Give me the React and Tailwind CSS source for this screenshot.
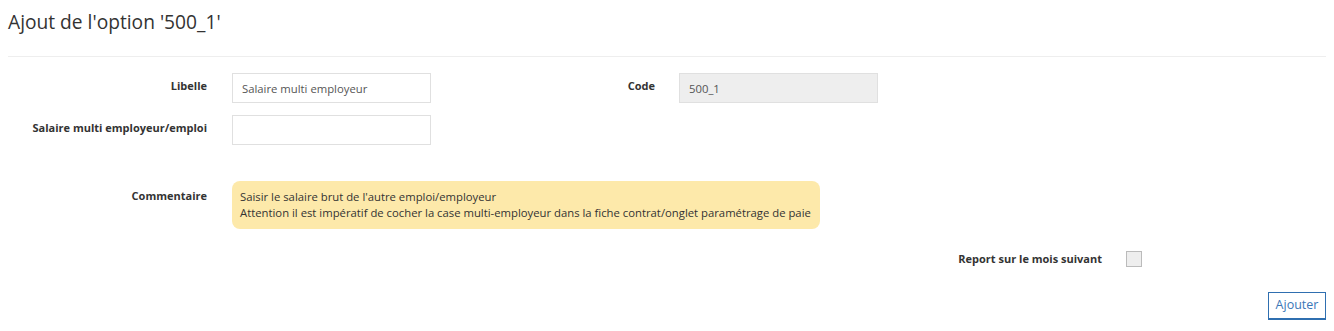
export default function App() {
  const label = 'text-right text-[11px] leading-4 font-bold text-[#333]';
  const input = 'h-[30px] w-[199px] border border-[#e0e0e0] px-[9px] text-[11.3px] text-[#555] outline-none';

  return (
    <div className="min-h-screen bg-white px-2 font-['Open_Sans',sans-serif] text-[#333]">
      <h1 className="mt-2 text-[19.2px] leading-7 font-normal">Ajout de l'option '500_1'</h1>
      <hr className="mt-5 border-0 border-t border-[#eeeeee]" />

      {/* Libelle + Code */}
      <div className="mt-4 flex items-start">
        <label className={`${label} w-[199px] pt-[5px]`}>Libelle</label>
        <input className={`${input} ml-[25px]`} defaultValue="Salaire multi employeur" />
        <label className={`${label} w-[224px] pt-[5px]`}>Code</label>
        <input className={`${input} ml-6 bg-[#eeeeee]`} defaultValue="500_1" readOnly />
      </div>

      <div className="mt-3 flex items-start">
        <label className={`${label} w-[199px] pt-[5px]`}>Salaire multi employeur/emploi</label>
        <input className={`${input} ml-[25px]`} />
      </div>

      {/* Commentaire */}
      <div className="mt-9 flex items-start">
        <label className={`${label} w-[199px] pt-[7px]`}>Commentaire</label>
        <div className="ml-[25px] w-fit rounded-lg bg-[#fde9aa] py-2 pr-[9px] pl-2 text-[11.3px] leading-4 text-[#333]">
          <div>Saisir le salaire brut de l'autre emploi/employeur</div>
          <div>Attention il est impératif de cocher la case multi-employeur dans la fiche contrat/onglet paramétrage de paie</div>
        </div>
      </div>

      {/* Report */}
      <div className="mt-[20px] flex items-start justify-end pr-[184px]">
        <label className={`${label} pt-[2px]`}>Report sur le mois suivant</label>
        <span className="mt-[2px] ml-6 block h-4 w-4 border border-[#bbbbbb] bg-[#eeeeee]" />
      </div>

      <div className="mt-[25px] flex justify-end">
        <button className="h-[28px] w-[58px] border border-b-2 border-[#2f6fb0] bg-white text-[12.5px] text-[#3b77b7]">
          Ajouter
        </button>
      </div>
    </div>
  );
}
